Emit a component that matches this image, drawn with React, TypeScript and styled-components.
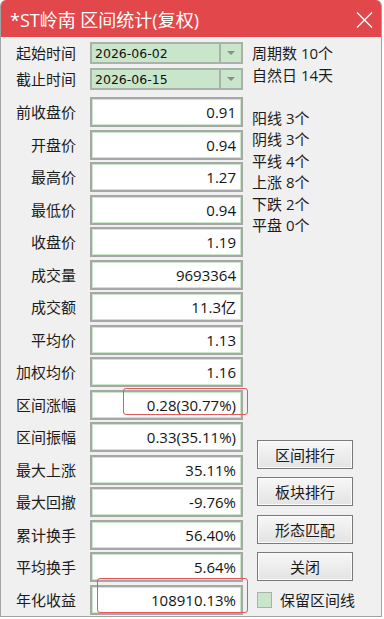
import React from 'react'
import styled, { createGlobalStyle } from 'styled-components'

const FONT = '"Open Sans", "Noto Sans CJK SC", sans-serif'

const GlobalStyle = createGlobalStyle`
  html, body {
    margin: 0;
    padding: 0;
    background: #ffffff;
  }
  body {
    font-family: ${FONT};
  }
`

const Window = styled.div`
  width: 382px;
  height: 617px;
  box-sizing: border-box;
  background: #f0f0f0;
  border: 1px solid #a3a3a3;
  border-top: 0;
  border-radius: 6px 6px 0 0;
  overflow: hidden;
  display: flex;
  flex-direction: column;
  font-family: ${FONT};
`

const TitleBar = styled.div`
  height: 37px;
  margin: 0 -1px;
  flex-shrink: 0;
  background: #e2474b;
  color: #ffffff;
  display: flex;
  align-items: center;
  justify-content: space-between;
  padding: 2px 9px 0 10px;
  box-sizing: border-box;
`

const Title = styled.span`
  font-size: 18px;
  line-height: 22px;
  white-space: nowrap;
`

const Body = styled.div`
  flex: 1;
  display: flex;
  padding-top: 5px;
`

const LeftCol = styled.div`
  display: flex;
  flex-direction: column;
`

const DateBlock = styled.div`
  display: flex;
  flex-direction: column;
  gap: 4px;
  margin-bottom: 7px;
`

const ValueBlock = styled.div`
  display: flex;
  flex-direction: column;
  gap: 2.53px;
`

const Row = styled.div<{ $h: number }>`
  display: flex;
  align-items: center;
  height: ${p => p.$h}px;
`

const Label = styled.div`
  width: 75px;
  margin-right: 14px;
  text-align: right;
  font-size: 15px;
  line-height: 20px;
  color: #1c1c1c;
  white-space: nowrap;
`

const DateField = styled.div`
  width: 153px;
  height: 100%;
  box-sizing: border-box;
  background: #c9e6ca;
  border: 2px solid #a9b2a9;
  display: flex;
  align-items: center;
`

const DateText = styled.span`
  flex: 1;
  padding-left: 3px;
  font-family: "DejaVu Sans", sans-serif;
  font-size: 12.5px;
  color: #111111;
`

const DropButton = styled.div`
  width: 20px;
  height: 100%;
  border-left: 2px solid #a9b2a9;
  display: flex;
  align-items: center;
  justify-content: center;
`

const Arrow = styled.div`
  width: 0;
  height: 0;
  border-left: 4px solid transparent;
  border-right: 4px solid transparent;
  border-top: 4px solid #8c8c8c;
  margin-top: -1px;
`

const ValueField = styled.div`
  position: relative;
  width: 153px;
  height: 100%;
  box-sizing: border-box;
  background: #ffffff;
  border: 2px solid #a7a7a7;
  box-shadow: inset 0 0 0 1px #cbe6cb;
  display: flex;
  align-items: center;
  justify-content: flex-end;
  padding-right: 5px;
  font-size: 15px;
  line-height: 20px;
  color: #141414;
`

const Highlight = styled.div<{ $t: number; $l: number; $r: number; $b: number }>`
  position: absolute;
  top: ${p => p.$t}px;
  left: ${p => p.$l}px;
  right: ${p => p.$r}px;
  bottom: ${p => p.$b}px;
  border: 1px solid #e5575b;
  border-radius: 3px;
  pointer-events: none;
`

const RightCol = styled.div`
  flex: 1;
  display: flex;
  flex-direction: column;
  margin-left: 9px;
  padding-top: 1px;
  padding-bottom: 8px;
`

const InfoLine = styled.div`
  height: 21.5px;
  line-height: 21.5px;
  font-size: 15px;
  color: #1c1c1c;
  white-space: nowrap;
`

const ButtonGroup = styled.div`
  margin-top: auto;
  margin-left: 5px;
  display: flex;
  flex-direction: column;
  gap: 8.3px;
`

const Button = styled.button`
  width: 96px;
  height: 29px;
  box-sizing: border-box;
  padding: 0;
  border: 1px solid #7a7a7a;
  background: linear-gradient(#f7f7f7, #e3e3e3);
  box-shadow: inset 0 0 0 1px #fbfbfb;
  font-family: "Noto Sans CJK SC", sans-serif;
  font-size: 15px;
  color: #1a1a1a;
`

const CheckRow = styled.label`
  display: flex;
  align-items: center;
  margin-top: 11px;
  margin-left: 5px;
  font-size: 15px;
  line-height: 16px;
  color: #1c1c1c;
`

const CheckBox = styled.span`
  width: 15px;
  height: 16px;
  box-sizing: border-box;
  background: #c9e6ca;
  border: 1px solid #a9b2a9;
  margin-right: 8px;
`

const dates = [
  { label: '起始时间', value: '2026-06-02' },
  { label: '截止时间', value: '2026-06-15' }
]

type Mark = { t: number; l: number; r: number; b: number }

const values: { label: string; value: string; mark?: Mark }[] = [
  { label: '前收盘价', value: '0.91' },
  { label: '开盘价', value: '0.94' },
  { label: '最高价', value: '1.27' },
  { label: '最低价', value: '0.94' },
  { label: '收盘价', value: '1.19' },
  { label: '成交量', value: '9693364' },
  { label: '成交额', value: '11.3亿' },
  { label: '平均价', value: '1.13' },
  { label: '加权均价', value: '1.16' },
  { label: '区间涨幅', value: '0.28(30.77%)', mark: { t: -4, l: 31, r: -7, b: 3 } },
  { label: '区间振幅', value: '0.33(35.11%)' },
  { label: '最大上涨', value: '35.11%' },
  { label: '最大回撤', value: '-9.76%' },
  { label: '累计换手', value: '56.40%' },
  { label: '平均换手', value: '5.64%' },
  { label: '年化收益', value: '108910.13%', mark: { t: -9, l: 5, r: -7, b: 0 } }
]

const info = ['周期数 10个', '自然日 14天', '', '阳线 3个', '阴线 3个', '平线 4个', '上涨 8个', '下跌 2个', '平盘 0个']

const buttons = ['区间排行', '板块排行', '形态匹配', '关闭']

const CloseIcon = () => (
  <svg width='17' height='16' viewBox='0 0 17 16'>
    <path d='M1 0.5 L16 15.5 M16 0.5 L1 15.5' stroke='#ffffff' strokeWidth='1.4' fill='none' />
  </svg>
)

export default function App() {
  return (
    <>
      <GlobalStyle />
      <Window>
        <TitleBar>
          <Title>*ST岭南 区间统计(复权)</Title>
          <CloseIcon />
        </TitleBar>
        <Body>
          <LeftCol>
            <DateBlock>
              {dates.map(d => (
                <Row key={d.label} $h={22}>
                  <Label>{d.label}</Label>
                  <DateField>
                    <DateText>{d.value}</DateText>
                    <DropButton><Arrow /></DropButton>
                  </DateField>
                </Row>
              ))}
            </DateBlock>
            <ValueBlock>
              {values.map(v => (
                <Row key={v.label} $h={30}>
                  <Label>{v.label}</Label>
                  <ValueField>
                    {v.value}
                    {v.mark && <Highlight $t={v.mark.t} $l={v.mark.l} $r={v.mark.r} $b={v.mark.b} />}
                  </ValueField>
                </Row>
              ))}
            </ValueBlock>
          </LeftCol>
          <RightCol>
            {info.map((line, i) => (
              <InfoLine key={i}>{line}</InfoLine>
            ))}
            <ButtonGroup>
              {buttons.map(b => (
                <Button key={b}>{b}</Button>
              ))}
            </ButtonGroup>
            <CheckRow>
              <CheckBox />
              保留区间线
            </CheckRow>
          </RightCol>
        </Body>
      </Window>
    </>
  )
}
